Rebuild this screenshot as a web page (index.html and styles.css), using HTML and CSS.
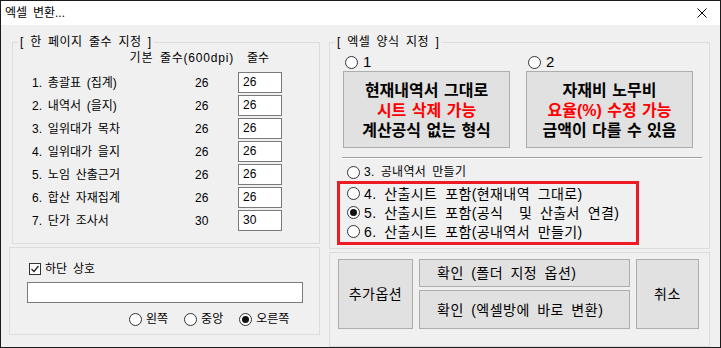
FILE: index.html
```html
<!DOCTYPE html>
<html>
<head>
<meta charset="utf-8">
<title>엑셀 변환...</title>
<link rel="stylesheet" href="styles.css">
</head>
<body>
<div class="window">
  <div class="titlebar">
    <span class="title">엑셀 변환...</span>
    <svg class="close" width="10" height="10" viewBox="0 0 10 10"><path d="M0.5 0.5 L9.5 9.5 M9.5 0.5 L0.5 9.5" stroke="#000" stroke-width="1" fill="none"/></svg>
  </div>
  <div class="client">
    <div class="col col-left">
      <fieldset class="group lines">
        <legend>[ 한 페이지 줄수 지정 ]</legend>
        <div class="line-head"><span class="head-base">기본 줄수(600dpi)</span><span class="head-count">줄수</span></div>
        <div class="line-grid">
          <span class="lbl">1. 총괄표 (집계)</span><span class="val">26</span><span class="field">26</span>
          <span class="lbl">2. 내역서 (을지)</span><span class="val">26</span><span class="field">26</span>
          <span class="lbl">3. 일위대가 목차</span><span class="val">26</span><span class="field">26</span>
          <span class="lbl">4. 일위대가 을지</span><span class="val">26</span><span class="field">26</span>
          <span class="lbl">5. 노임 산출근거</span><span class="val">26</span><span class="field">26</span>
          <span class="lbl">6. 합산 자재집계</span><span class="val">26</span><span class="field">26</span>
          <span class="lbl">7. 단가 조사서</span><span class="val">30</span><span class="field">30</span>
        </div>
      </fieldset>
      <div class="box footer">
        <div class="check-row">
          <span class="check"><svg width="10" height="10" viewBox="0 0 10 10"><path d="M1.5 5 L4 7.5 L8.5 2" stroke="#222" stroke-width="1.3" fill="none"/></svg></span>
          하단 상호
        </div>
        <div class="field wide"></div>
        <div class="align-row">
          <span class="opt"><span class="radio"></span>왼쪽</span>
          <span class="opt"><span class="radio"></span>중앙</span>
          <span class="opt"><span class="radio on"></span>오른쪽</span>
        </div>
      </div>
    </div>
    <div class="col col-right">
      <fieldset class="group format">
        <legend>[ 엑셀 양식 지정 ]</legend>
        <div class="choices">
          <div class="choice">
            <div class="choice-label"><span class="radio"></span>1</div>
            <button class="btn big">현재내역서 그대로<br><span class="red">시트 삭제 가능</span><br>계산공식 없는 형식</button>
          </div>
          <div class="choice">
            <div class="choice-label"><span class="radio"></span>2</div>
            <button class="btn big">자재비 노무비<br><span class="red">요율(%) 수정 가능</span><br>금액이 다를 수 있음</button>
          </div>
        </div>
        <div class="sep"></div>
        <div class="opt-row small"><span class="radio"></span>3. 공내역서 만들기</div>
        <div class="highlight">
          <div class="opt-row"><span class="radio"></span>4. 산출시트 포함(현재내역 그대로)</div>
          <div class="opt-row"><span class="radio on"></span>5. 산출시트 포함(공식&nbsp; 및 산출서 연결)</div>
          <div class="opt-row"><span class="radio"></span>6. 산출시트 포함(공내역서 만들기)</div>
        </div>
      </fieldset>
      <div class="box actions">
        <button class="btn side">추가옵션</button>
        <div class="ok-stack">
          <button class="btn ok ok-top">확인 (폴더 지정 옵션)</button>
          <button class="btn ok ok-bottom">확인 (엑셀방에 바로 변환)</button>
        </div>
        <button class="btn side cancel">취소</button>
      </div>
    </div>
  </div>
</div>
</body>
</html>
```

FILE: styles.css
```css
* {
    box-sizing: border-box;
    margin: 0;
    padding: 0;
}
body {
    width: 721px;
    height: 348px;
    overflow: hidden;
    background: #fff;
    color: #000;
    font: 12px/16px "Liberation Sans", "Noto Sans CJK KR", sans-serif;
    word-spacing: 2.5px;
}
.window {
    width: 721px;
    height: 348px;
    border: 1px solid #1b1b1b;
    background: #f0f0f0;
    display: flex;
    flex-direction: column;
}
.titlebar {
    height: 24px;
    flex: none;
    background: #fff;
    display: flex;
    align-items: center;
    justify-content: space-between;
    padding: 0 13px 0 4px;
}
.client {
    flex: 1;
    display: flex;
    gap: 9px;
    padding: 10px 0 0 8px;
}
.col {
    display: flex;
    flex-direction: column;
}
.col-left {
    width: 311px;
}
.col-right {
    width: 381px;
}

/* group boxes */
.group {
    border: 1px solid #dcdcdc;
    padding: 0;
    min-width: 0;
}
.group legend {
    margin-left: 5px;
    padding: 0 2px;
    line-height: 14px;
    letter-spacing: 0.5px;
}
.box {
    border: 1px solid #dcdcdc;
    margin-top: 3px;
}

/* line counts */
.lines {
    margin-left: 3px;
    height: 209px;
}
.line-head,
.line-grid {
    display: grid;
    grid-template-columns: 163px 43px 44px;
    padding-left: 19px;
}
.line-head {
    margin-top: 1px;
    height: 16px;
}
.head-base {
    grid-column: 1 / 3;
    text-align: right;
    padding-right: 4px;
    letter-spacing: 0.8px;
}
.head-count {
    padding-left: 9px;
}
.line-grid {
    margin-top: 6px;
    grid-auto-rows: 21px;
    row-gap: 2px;
    align-items: center;
}
.field {
    display: block;
    height: 21px;
    border: 1px solid #7a7a7a;
    background: #fff;
    padding: 0 4px;
    line-height: 18px;
}

/* footer */
.footer {
    height: 88px;
    padding: 13px 17px 0;
}
.check-row {
    display: flex;
    align-items: center;
    gap: 4px;
    height: 16px;
    padding-left: 2px;
}
.check {
    width: 12px;
    height: 12px;
    border: 1px solid #333;
    background: #fff;
    display: flex;
    align-items: center;
    justify-content: center;
}
.field.wide {
    width: 276px;
    margin-top: 5px;
}
.align-row {
    display: flex;
    gap: 16px;
    margin-top: 8px;
    padding-left: 102px;
    height: 16px;
}
.opt {
    display: flex;
    align-items: center;
    gap: 4px;
}
.radio {
    width: 13px;
    height: 13px;
    flex: none;
    border: 1px solid #333;
    border-radius: 50%;
    background: #fff;
    display: inline-flex;
    align-items: center;
    justify-content: center;
}
.radio.on::after {
    content: "";
    width: 7px;
    height: 7px;
    border-radius: 50%;
    background: #111;
}

/* format */
.format {
    height: 214px;
}
.choices {
    display: flex;
    gap: 16px;
    padding-left: 13px;
    margin-top: 6px;
}
.choice-label {
    display: flex;
    align-items: center;
    gap: 5px;
    height: 14px;
    padding-left: 2px;
    font-size: 15px;
}
.btn {
    background: #e1e1e1;
    border: 1px solid #adadad;
    color: #000;
    font: 14px/16px "Liberation Sans", "Noto Sans CJK KR", sans-serif;
    letter-spacing: 0.5px;
    word-spacing: 3px;
}
.btn.big {
    width: 167px;
    height: 77px;
    margin-top: 2px;
    padding-top: 2px;
    font-size: 16px;
    font-weight: bold;
    line-height: 20px;
    letter-spacing: 0;
    word-spacing: 1px;
}
.red {
    color: #f00;
}
.sep {
    width: 360px;
    height: 2px;
    margin: 9px 0 0 12px;
    border-top: 1px solid #a0a0a0;
    border-bottom: 1px solid #fff;
}
.opt-row {
    display: flex;
    align-items: center;
    gap: 4px;
    height: 19px;
    font-size: 14px;
    letter-spacing: 0.4px;
    word-spacing: 3.5px;
}
.opt-row.small {
    height: 16px;
    margin-top: 5px;
    padding-left: 17px;
    font-size: 12px;
    letter-spacing: 0.3px;
    word-spacing: 2.5px;
}
.highlight {
    width: 302px;
    height: 64px;
    margin: 1px 0 0 7px;
    border: 3px solid #ed1c24;
    padding-left: 7px;
}

/* actions */
.actions {
    flex: 1;
    display: flex;
    gap: 6px;
    padding: 6px 0 0 8px;
}
.side {
    width: 75px;
    height: 70px;
}
.cancel {
    width: 63px;
}
.ok-stack {
    display: flex;
    flex-direction: column;
    gap: 3px;
    width: 211px;
}
.ok {
    text-align: left;
    padding-left: 17px;
}
.ok-top {
    height: 28px;
}
.ok-bottom {
    height: 39px;
}
```
